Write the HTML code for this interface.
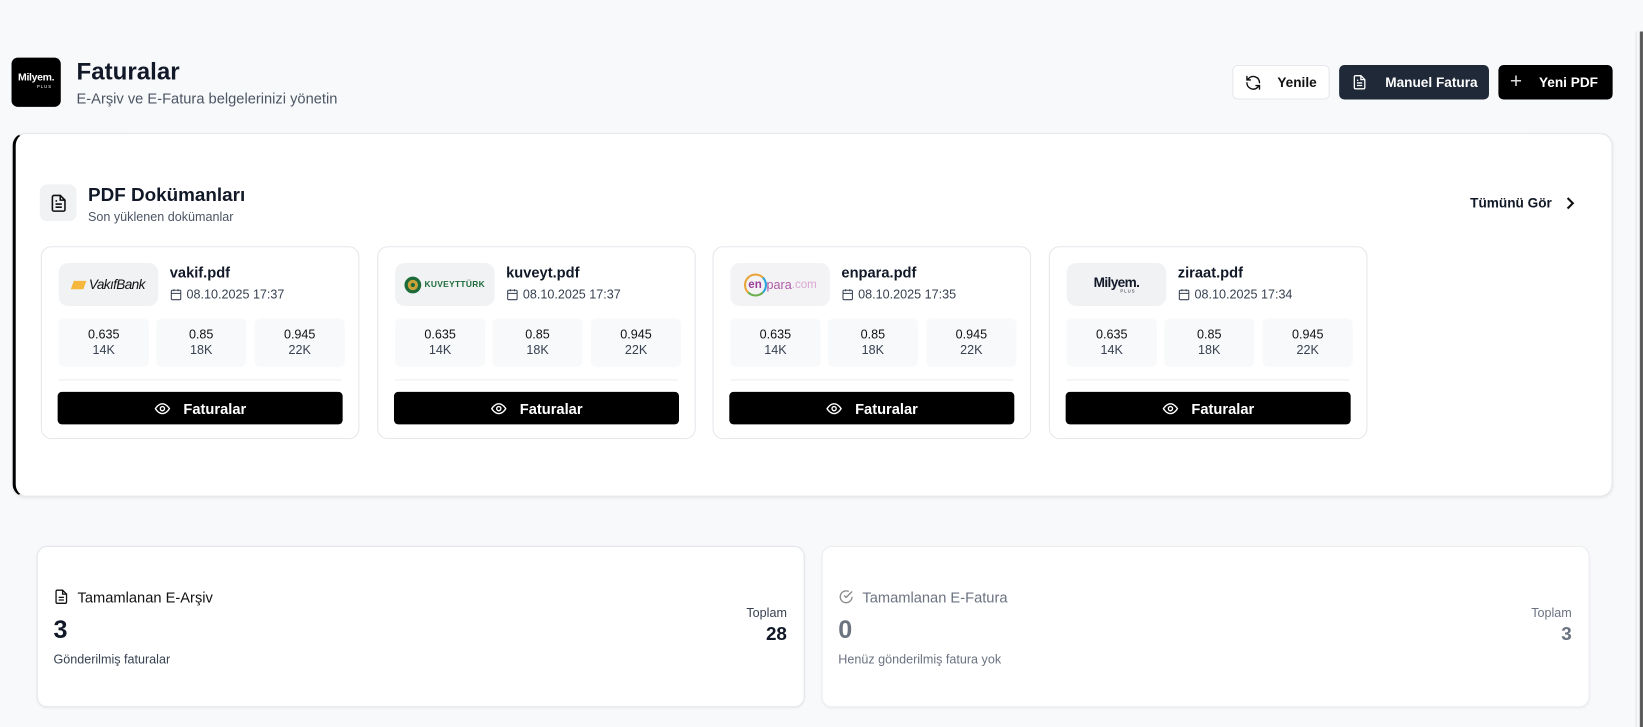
<!DOCTYPE html>
<html><head><meta charset="utf-8"><style>
*{box-sizing:border-box;margin:0;padding:0}
html,body{width:1643px;height:727px;overflow:hidden;background:#f8f9fb}
#w{width:1568px;height:694px;transform:scale(1.04784);transform-origin:0 0;position:relative;font-family:"Liberation Sans",sans-serif;color:#111827}
.abs{position:absolute}
.btn{position:absolute;top:62px;height:33px;border-radius:5px;display:flex;align-items:center;font-size:13px;font-weight:bold;white-space:nowrap}
.card{position:absolute;top:235px;width:304px;height:184px;background:#fff;border:1px solid #e5e7eb;border-radius:10px}
.logo{position:absolute;left:16px;top:15px;width:95px;height:41px;background:#f1f2f4;border-radius:9px;display:flex;align-items:center;justify-content:center}
.fn{position:absolute;left:122px;top:16px;font-size:14px;font-weight:bold}
.dt{position:absolute;left:122px;top:38px;font-size:12px;color:#374151;display:flex;align-items:center;gap:4px}
.st{position:absolute;top:68px;width:86px;height:46px;background:#f8f9fa;border-radius:5px;text-align:center;font-size:12px;line-height:15px;padding-top:8px;color:#111}
.st span{color:#374151}
.hr{position:absolute;left:16px;right:16px;top:126px;border-top:1px solid #eceef0}
.fb{position:absolute;left:15px;right:15px;top:138px;height:31px;background:#000;border-radius:4px;color:#fff;font-size:14px;font-weight:bold;display:flex;align-items:center;justify-content:center;gap:12px}
.sc{position:absolute;top:521px;height:154px;background:#fff;border:1px solid #e3e5e8;border-radius:10px;box-shadow:0 1px 2px rgba(0,0,0,.05)}
</style></head><body><div id="w">
<div class="abs" style="left:11px;top:55px;width:47px;height:47px;background:#000;border-radius:6px;color:#fff;text-align:center;padding-top:14px">
<div style="font-size:10px;font-weight:bold;letter-spacing:-.3px">Milyem.</div><div style="font-size:4px;margin-left:16px;letter-spacing:1px">PLUS</div></div>
<div class="abs" style="left:73px;top:55px;font-size:23px;font-weight:bold;color:#111827">Faturalar</div>
<div class="abs" style="left:73px;top:86px;font-size:14px;color:#4b5563">E-Arşiv ve E-Fatura belgelerinizi yönetin</div>

<div class="btn" style="left:1176px;width:93px;background:#fff;border:1px solid #e5e7eb;color:#111">
<svg style="margin-left:11px" width="16" height="16" viewBox="0 0 24 24" fill="none" stroke="#111" stroke-width="2" stroke-linecap="round"><path d="M21 12a9 9 0 0 0-15.5-6.2L3 8M3 3v5h5M3 12a9 9 0 0 0 15.5 6.2L21 16M21 21v-5h-5"/></svg><span style="margin-left:15px">Yenile</span></div>
<div class="btn" style="left:1278px;width:143px;background:#1f2937;color:#fff">
<svg style="margin-left:12px" width="15" height="15" viewBox="0 0 24 24" fill="none" stroke="#fff" stroke-width="2"><path d="M14 2H6a2 2 0 0 0-2 2v16a2 2 0 0 0 2 2h12a2 2 0 0 0 2-2V8zM14 2v6h6M8 13h8M8 17h8M8 9h2"/></svg><span style="margin-left:17px">Manuel Fatura</span></div>
<div class="btn" style="left:1430px;width:109px;background:#000;color:#fff">
<span style="margin-left:11px;font-size:20px;font-weight:normal;color:#ddd">+</span><span style="margin-left:16px">Yeni PDF</span></div>

<div class="abs" style="left:1561px;top:30px;width:1px;height:697px;background:#e5e7eb"></div>
<div class="abs" style="left:1565px;top:30px;width:3px;height:697px;background:#555"></div>

<div class="abs" style="left:12px;top:127px;width:1527px;height:347px;background:#fff;border:1px solid #e3e5e8;border-left:3px solid #000;border-radius:12px;box-shadow:0 1px 3px rgba(0,0,0,.08)"></div>
<div class="abs" style="left:38px;top:176px;width:35px;height:35px;background:#f1f2f4;border-radius:7px;display:flex;align-items:center;justify-content:center">
<svg width="18" height="18" viewBox="0 0 24 24" fill="none" stroke="#111" stroke-width="2"><path d="M14 2H6a2 2 0 0 0-2 2v16a2 2 0 0 0 2 2h12a2 2 0 0 0 2-2V8zM14 2v6h6M8 13h8M8 17h8M8 9h2"/></svg></div>
<div class="abs" style="left:84px;top:176px;font-size:18px;font-weight:bold;color:#111827">PDF Dokümanları</div>
<div class="abs" style="left:84px;top:200px;font-size:12px;color:#4b5563">Son yüklenen dokümanlar</div>
<div class="abs" style="left:1403px;top:186px;font-size:13px;font-weight:bold">Tümünü Gör</div>
<svg class="abs" style="left:1492px;top:187px" width="12" height="14" viewBox="0 0 12 14" fill="none" stroke="#111" stroke-width="2"><path d="M4 2l5 5-5 5"/></svg>

<!-- cards -->
<div class="card" style="left:39px"><div class="logo"><span style="display:inline-block;width:12px;height:8px;background:#f5b83d;transform:skewX(-20deg);margin-right:4px"></span><span style="font-size:13px;font-style:italic;letter-spacing:-.6px;color:#111">VakıfBank</span></div>
<div class="fn">vakif.pdf</div><div class="dt"><svg width="12" height="12" viewBox="0 0 24 24" fill="none" stroke="#374151" stroke-width="2"><rect x="3" y="4" width="18" height="18" rx="2"/><path d="M16 2v4M8 2v4M3 10h18"/></svg><span>08.10.2025 17:37</span></div>
<div class="st" style="left:16px">0.635<br><span>14K</span></div><div class="st" style="left:109px">0.85<br><span>18K</span></div><div class="st" style="left:203px">0.945<br><span>22K</span></div>
<div class="hr"></div><div class="fb"><svg width="16" height="16" viewBox="0 0 24 24" fill="none" stroke="#fff" stroke-width="2"><path d="M2 12s4-7 10-7 10 7 10 7-4 7-10 7S2 12 2 12z"/><circle cx="12" cy="12" r="3"/></svg>Faturalar</div></div>

<div class="card" style="left:360px"><div class="logo"><span style="width:16px;height:16px;border-radius:50%;background:#1d6b3a;display:inline-block;margin-right:3px;border:3px solid #1d6b3a;box-shadow:inset 0 0 0 3px #c9a23a"></span><span style="font-size:8px;font-weight:bold;color:#1d6b3a;letter-spacing:.3px">KUVEYTTÜRK</span></div>
<div class="fn">kuveyt.pdf</div><div class="dt"><svg width="12" height="12" viewBox="0 0 24 24" fill="none" stroke="#374151" stroke-width="2"><rect x="3" y="4" width="18" height="18" rx="2"/><path d="M16 2v4M8 2v4M3 10h18"/></svg><span>08.10.2025 17:37</span></div>
<div class="st" style="left:16px">0.635<br><span>14K</span></div><div class="st" style="left:109px">0.85<br><span>18K</span></div><div class="st" style="left:203px">0.945<br><span>22K</span></div>
<div class="hr"></div><div class="fb"><svg width="16" height="16" viewBox="0 0 24 24" fill="none" stroke="#fff" stroke-width="2"><path d="M2 12s4-7 10-7 10 7 10 7-4 7-10 7S2 12 2 12z"/><circle cx="12" cy="12" r="3"/></svg>Faturalar</div></div>

<div class="card" style="left:680px"><div class="logo" style="background:#f3f2f5"><span style="width:22px;height:22px;border-radius:50%;border:2px solid #e9a43a;border-right-color:#2aa6d8;border-bottom-color:#6ab04c;display:inline-flex;align-items:center;justify-content:center;font-size:11px;font-weight:bold;color:#9b3e9b">en</span><span style="font-size:12px;color:#b05aa6">para</span><span style="font-size:11px;color:#d9a8d2">.com</span></div>
<div class="fn">enpara.pdf</div><div class="dt"><svg width="12" height="12" viewBox="0 0 24 24" fill="none" stroke="#374151" stroke-width="2"><rect x="3" y="4" width="18" height="18" rx="2"/><path d="M16 2v4M8 2v4M3 10h18"/></svg><span>08.10.2025 17:35</span></div>
<div class="st" style="left:16px">0.635<br><span>14K</span></div><div class="st" style="left:109px">0.85<br><span>18K</span></div><div class="st" style="left:203px">0.945<br><span>22K</span></div>
<div class="hr"></div><div class="fb"><svg width="16" height="16" viewBox="0 0 24 24" fill="none" stroke="#fff" stroke-width="2"><path d="M2 12s4-7 10-7 10 7 10 7-4 7-10 7S2 12 2 12z"/><circle cx="12" cy="12" r="3"/></svg>Faturalar</div></div>

<div class="card" style="left:1001px"><div class="logo" style="flex-direction:column;line-height:1"><span style="font-size:13px;font-weight:bold;letter-spacing:-.6px">Milyem.</span><span style="font-size:4px;margin-left:22px;letter-spacing:1px">PLUS</span></div>
<div class="fn">ziraat.pdf</div><div class="dt"><svg width="12" height="12" viewBox="0 0 24 24" fill="none" stroke="#374151" stroke-width="2"><rect x="3" y="4" width="18" height="18" rx="2"/><path d="M16 2v4M8 2v4M3 10h18"/></svg><span>08.10.2025 17:34</span></div>
<div class="st" style="left:16px">0.635<br><span>14K</span></div><div class="st" style="left:109px">0.85<br><span>18K</span></div><div class="st" style="left:203px">0.945<br><span>22K</span></div>
<div class="hr"></div><div class="fb"><svg width="16" height="16" viewBox="0 0 24 24" fill="none" stroke="#fff" stroke-width="2"><path d="M2 12s4-7 10-7 10 7 10 7-4 7-10 7S2 12 2 12z"/><circle cx="12" cy="12" r="3"/></svg>Faturalar</div></div>

<!-- stats -->
<div class="sc" style="left:35px;width:733px">
<svg class="abs" style="left:15px;top:40px" width="15" height="15" viewBox="0 0 24 24" fill="none" stroke="#111" stroke-width="2"><path d="M14 2H6a2 2 0 0 0-2 2v16a2 2 0 0 0 2 2h12a2 2 0 0 0 2-2V8zM14 2v6h6M8 13h8M8 17h8"/></svg>
<div class="abs" style="left:38px;top:40px;font-size:14px;color:#111">Tamamlanan E-Arşiv</div>
<div class="abs" style="left:15px;top:66px;font-size:24px;font-weight:bold">3</div>
<div class="abs" style="left:15px;top:100px;font-size:12px;color:#374151">Gönderilmiş faturalar</div>
<div class="abs" style="right:16px;top:56px;font-size:12px;color:#374151">Toplam</div>
<div class="abs" style="right:16px;top:73px;font-size:18px;font-weight:bold">28</div></div>
<div class="sc" style="left:784px;width:733px;border-color:#eceef0">
<svg class="abs" style="left:15px;top:40px" width="15" height="15" viewBox="0 0 24 24" fill="none" stroke="#888" stroke-width="2"><path d="M21 12a9 9 0 1 1-5-8M21 4l-9 9-3-3"/></svg>
<div class="abs" style="left:38px;top:40px;font-size:14px;color:#6b7280">Tamamlanan E-Fatura</div>
<div class="abs" style="left:15px;top:66px;font-size:24px;font-weight:bold;color:#6b7280">0</div>
<div class="abs" style="left:15px;top:100px;font-size:12px;color:#6b7280">Henüz gönderilmiş fatura yok</div>
<div class="abs" style="right:16px;top:56px;font-size:12px;color:#6b7280">Toplam</div>
<div class="abs" style="right:16px;top:73px;font-size:18px;font-weight:bold;color:#6b7280">3</div></div>
</div></body></html>
